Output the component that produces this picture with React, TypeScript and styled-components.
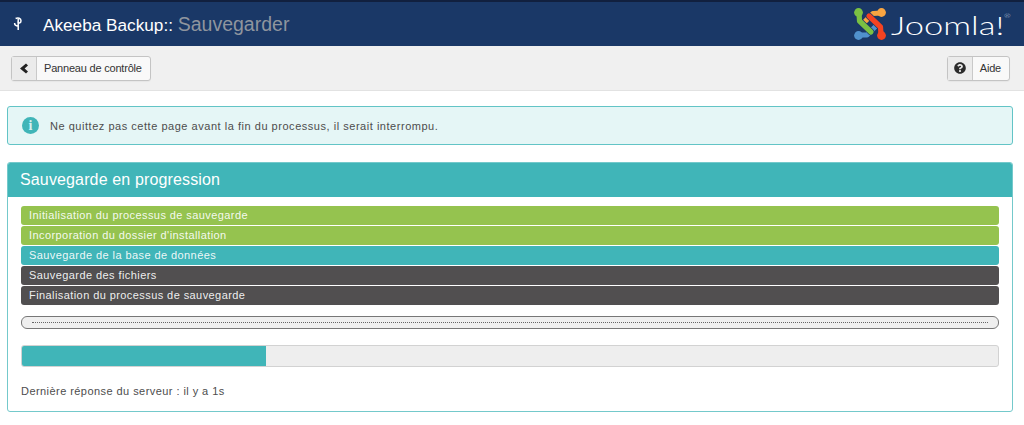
import React from "react";
import styled, { createGlobalStyle } from "styled-components";
import { FaQuestionCircle } from "react-icons/fa";

const Global = createGlobalStyle`
  html, body { margin: 0; padding: 0; background: #fff; }
  body { font-family: "Liberation Sans", Arial, sans-serif; color: #515151; }
`;

const Header = styled.header`
  height: 46px;
  box-sizing: border-box;
  background: #1a3867;
  border-top: 2px solid #11203f;
  display: flex;
  align-items: center;
  padding: 0 16px 0 13px;
`;
const TitleIcon = styled.span`
  width: 10px;
  display: flex;
  justify-content: center;
  margin-right: 20px;
`;
const Title = styled.h1`
  margin: 0;
  font-size: 17.2px;
  font-weight: 400;
  color: #fff;
  flex: 1;
  line-height: 44px;
`;
const TitleSub = styled.span`
  font-size: 19.5px;
  color: #8f959e;
`;
const Logo = styled.div`
  display: flex;
  align-items: center;
  gap: 5px;
`;
const LogoWord = styled.span`
  display: inline-block;
  width: 117px;
  font-family: "Lato", sans-serif;
  font-weight: 300;
  font-size: 26px;
  line-height: 30px;
  color: #fff;
  position: relative;
  top: 1px;
  transform: scaleX(1.33);
  transform-origin: left center;
`;
const Reg = styled.span`
  font-size: 6px;
  position: absolute;
  top: 3px;
  left: 85px;
  line-height: 6px;
  color: #cfd6e0;
`;

const Toolbar = styled.div`
  height: 45px;
  box-sizing: border-box;
  background: #f0f0f0;
  border-bottom: 1px solid #e2e2e2;
  display: flex;
  justify-content: space-between;
  align-items: center;
  padding: 0 14px 0 11px;
`;
const Btn = styled.button`
  display: flex;
  align-items: stretch;
  height: 25px;
  padding: 0;
  box-sizing: border-box;
  border: 1px solid #c4c4c4;
  border-radius: 3px;
  background: #f9f9f9;
  font-family: inherit;
  font-size: 11px;
  letter-spacing: -0.2px;
  color: #333;
  box-shadow: 0 1px 1px rgba(0, 0, 0, 0.04);
`;
const BtnIcon = styled.span`
  width: 24px;
  display: flex;
  align-items: center;
  justify-content: center;
  background: #ebebeb;
  border-right: 1px solid #c9c9c9;
  color: #2b2b2b;
`;
const BtnLabel = styled.span`
  display: flex;
  align-items: center;
  padding: 0 8px 0 7px;
`;

const Main = styled.main`
  padding: 15px 11px 0 7px;
`;
const Alert = styled.div`
  height: 39px;
  box-sizing: border-box;
  background: #e5f6f6;
  border: 1px solid #62c4c6;
  border-radius: 3px;
  display: flex;
  align-items: center;
  gap: 11px;
  padding: 0 14px;
  font-size: 11px;
  letter-spacing: 0.53px;
  color: #4d4d4d;
`;
const InfoIcon = styled.span`
  width: 17px;
  height: 17px;
  border-radius: 50%;
  background: #40b5b8;
  color: #d7f0f0;
  display: flex;
  align-items: center;
  justify-content: center;
  font-family: "Liberation Serif", serif;
  font-weight: 700;
  font-size: 14px;
  letter-spacing: 0;
  flex: none;
`;
const Panel = styled.section`
  margin-top: 17px;
  border: 1px solid #74c9cb;
  border-radius: 3px;
  height: 250px;
  box-sizing: border-box;
  overflow: hidden;
`;
const PanelTitle = styled.h2`
  margin: 0;
  height: 34px;
  background: #40b5b8;
  color: #fff;
  font-size: 16px;
  font-weight: 400;
  letter-spacing: 0.14px;
  line-height: 34px;
  padding-left: 12px;
`;
const PanelBody = styled.div`
  padding: 9px 0 0 13px;
  width: 978px;
`;
const Steps = styled.div`
  display: flex;
  flex-direction: column;
  gap: 1px;
`;
const stepColors = { done: "#95c34f", active: "#40b5b8", todo: "#514f50" };
const Step = styled.div<{ $state: keyof typeof stepColors }>`
  height: 19px;
  line-height: 18px;
  border-radius: 3px;
  padding-left: 8px;
  font-size: 11px;
  letter-spacing: 0.42px;
  color: rgba(255, 255, 255, 0.92);
  background: ${(p) => stepColors[p.$state]};
`;
const Ticker = styled.div`
  margin-top: 11px;
  height: 13px;
  box-sizing: border-box;
  border: 1.5px solid #777;
  border-radius: 6px;
  background: #efefef;
  display: flex;
  align-items: center;
  padding: 0 10px;
`;
const TickerLine = styled.div`
  flex: 1;
  border-top: 1px dotted #666;
`;
const Progress = styled.div`
  margin-top: 16px;
  height: 22px;
  box-sizing: border-box;
  border: 1px solid #d2d2d2;
  border-radius: 3px;
  background: #eeeeee;
  overflow: hidden;
`;
const ProgressFill = styled.div`
  height: 100%;
  background: #40b5b8;
`;
const Status = styled.p`
  margin: 16px 0 0;
  font-size: 11px;
  line-height: 16px;
  letter-spacing: 0.44px;
  color: #4d4d4d;
`;

const bands = [
  { d: "M27 5 L19 5.5 L9 15.5", c: "#f9a541" },
  { d: "M5 27 L13 27 L23 17", c: "#5091cd" },
  { d: "M27 27 L26.5 19 L15 8", c: "#f44321" },
  { d: "M5 5 L5.5 13 L17 24", c: "#7ac143" },
];
const bulbs = [
  { x: 4.5, y: 4.5, c: "#7ac143" },
  { x: 27.5, y: 4.5, c: "#f9a541" },
  { x: 4.5, y: 27.5, c: "#5091cd" },
  { x: 27.5, y: 27.5, c: "#f44321" },
];

function JoomlaMark() {
  return (
    <svg width="32" height="32" viewBox="0 0 32 32" fill="none" strokeLinecap="round" strokeLinejoin="round">
      {bands.map((b) => (
        <g key={b.c}>
          <path d={b.d} stroke="#1a3867" strokeWidth="6.6" />
          <path d={b.d} stroke={b.c} strokeWidth="5.2" />
        </g>
      ))}
      {bulbs.map((b) => (
        <circle key={b.c} cx={b.x} cy={b.y} r="4.4" fill={b.c} />
      ))}
    </svg>
  );
}

function PinIcon() {
  return (
    <svg width="10" height="14" viewBox="0 0 10 14" fill="none" stroke="#fff" strokeWidth="1.5">
      <path d="M2.6 1.5 C5 0.4 8 1.2 8 3.8 C8 6.4 5.2 6.8 5.2 4.6" />
      <path d="M5.2 2 V13" />
      <path d="M1.6 6 C1.6 8.2 3 9 5.2 9" />
    </svg>
  );
}

function BackChevron() {
  return (
    <svg width="10" height="11" viewBox="0 0 10 11">
      <path d="M7 0.5 L9 2.5 L5.6 5.5 L9 8.5 L7 10.5 L1 5.5 Z" fill="#222" />
    </svg>
  );
}

export default function App() {
  return (
    <>
      <Global />
      <Header>
        <TitleIcon>
          <PinIcon />
        </TitleIcon>
        <Title>
          Akeeba Backup:: <TitleSub>Sauvegarder</TitleSub>
        </Title>
        <Logo>
          <JoomlaMark />
          <LogoWord>
            Joomla!<Reg>®</Reg>
          </LogoWord>
        </Logo>
      </Header>
      <Toolbar>
        <Btn>
          <BtnIcon>
            <BackChevron />
          </BtnIcon>
          <BtnLabel>Panneau de contrôle</BtnLabel>
        </Btn>
        <Btn>
          <BtnIcon>
            <FaQuestionCircle size={12} />
          </BtnIcon>
          <BtnLabel>Aide</BtnLabel>
        </Btn>
      </Toolbar>
      <Main>
        <Alert>
          <InfoIcon>i</InfoIcon>
          Ne quittez pas cette page avant la fin du processus, il serait interrompu.
        </Alert>
        <Panel>
          <PanelTitle>Sauvegarde en progression</PanelTitle>
          <PanelBody>
            <Steps>
              <Step $state="done">Initialisation du processus de sauvegarde</Step>
              <Step $state="done">Incorporation du dossier d'installation</Step>
              <Step $state="active">Sauvegarde de la base de données</Step>
              <Step $state="todo">Sauvegarde des fichiers</Step>
              <Step $state="todo">Finalisation du processus de sauvegarde</Step>
            </Steps>
            <Ticker>
              <TickerLine />
            </Ticker>
            <Progress>
              <ProgressFill style={{ width: "25%" }} />
            </Progress>
            <Status>Dernière réponse du serveur : il y a 1s</Status>
          </PanelBody>
        </Panel>
      </Main>
    </>
  );
}
